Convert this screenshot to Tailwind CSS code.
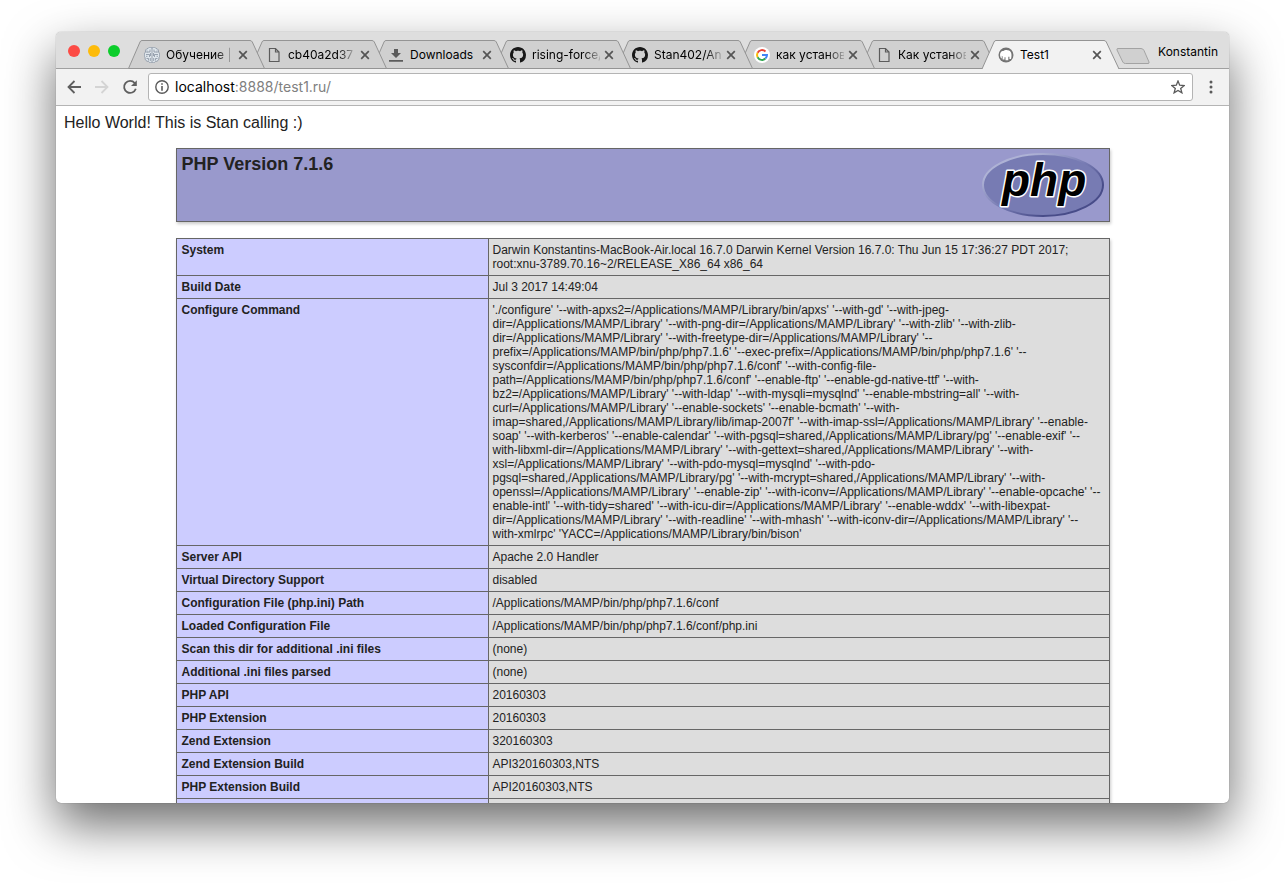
<!DOCTYPE html>
<html lang="ru">
<head>
<meta charset="utf-8">
<title>Test1</title>
<script src="https://cdn.jsdelivr.net/npm/@tailwindcss/browser@4"></script>
</head>
<body class="h-screen overflow-hidden bg-white px-14 pt-8 pb-20 font-['Inter',sans-serif] text-black">
<svg class="hidden" aria-hidden="true">
  <symbol id="tab" viewBox="0 0 138 29" preserveAspectRatio="none"><path d="M.5 28.5L12 2Q12.600 .5 14 .5H122Q123.500 .5 124.300 2L136.500 28.500Z" stroke="#949494" stroke-width="1"/></symbol>
  <symbol id="tab-active" viewBox="0 0 138 29" preserveAspectRatio="none"><path d="M0 29L12 2Q12.600 .5 14 .5H122Q123.500 .5 124.300 2L137 29" stroke="#949494" stroke-width="1"/></symbol>
  <symbol id="x" viewBox="0 0 10 10"><path d="M1.200 1.200L8.800 8.800M8.800 1.200L1.200 8.800" stroke="#555" stroke-width="1.700"/></symbol>
  <symbol id="doc" viewBox="0 0 16 16"><path d="M3.500 1.500H9.500L13 5V14.500H3.500ZM9.500 1.500V5H13" fill="none" stroke="#5c5c5c" stroke-width="1.200"/></symbol>
  <symbol id="dl" viewBox="0 0 16 16"><path d="M6 2H10V6H13L8 11L3 6H6ZM1 13H15V14.700H1Z" fill="#5c5c5c"/></symbol>
  <symbol id="gh" viewBox="0 0 16 16"><path fill="#181818" d="M8 0C3.58 0 0 3.58 0 8c0 3.54 2.29 6.53 5.47 7.59.4.07.55-.17.55-.38 0-.19-.01-.82-.01-1.49-2.01.37-2.53-.49-2.69-.94-.09-.23-.48-.94-.82-1.13-.28-.15-.68-.52-.01-.53.63-.01 1.08.58 1.23.82.72 1.21 1.87.87 2.33.66.07-.52.28-.87.51-1.07-1.78-.2-3.64-.89-3.64-3.95 0-.87.31-1.59.82-2.15-.08-.2-.36-1.02.08-2.12 0 0 .67-.21 2.2.82.64-.18 1.32-.27 2-.27s1.36.09 2 .27c1.53-1.04 2.2-.82 2.2-.82.44 1.1.16 1.92.08 2.12.51.56.82 1.27.82 2.15 0 3.07-1.87 3.75-3.65 3.95.29.25.54.73.54 1.48 0 1.07-.01 1.93-.01 2.2 0 .21.15.46.55.38A8.01 8.01 0 0 0 16 8c0-4.42-3.58-8-8-8Z"/></symbol>
</svg>
<div class="flex h-full flex-col overflow-hidden rounded-[5px] bg-white shadow-[0_0_1px_rgba(0,0,0,0.5),0_22px_50px_0_rgba(0,0,0,0.58)]">
  <header class="relative isolate flex h-[37px] shrink-0 items-start border-b border-[#a0a0a0] bg-[#dedede]">
    <div class="flex w-[72px] gap-2 pt-[13px] pl-3">
      <button aria-label="Close window" class="size-3 rounded-full bg-[#fc4b45]"></button>
      <button aria-label="Minimize window" class="size-3 rounded-full bg-[#fdbb0a]"></button>
      <button aria-label="Zoom window" class="size-3 rounded-full bg-[#0ccd2b]"></button>
    </div>
    <nav class="flex pt-2 text-xs leading-4">
      <div class="relative z-70 -mr-4 flex h-[29px] w-[138px] items-center px-4">
        <svg class="absolute inset-0 h-[29px] w-full fill-[#d0d0d0]"><use href="#tab"/></svg>
        <svg class="relative size-4 shrink-0" viewBox="0 0 16 16"><path d="M8 1C6.500-.3 4.500 .3 4 1.500C2 1.700 1.200 3.500 1.500 5C-.2 6.500 0 9.500 1 10.500C.8 13 2.500 14.500 4.500 14.500C5.500 16 7.300 16 8 15C8.700 16 10.500 16 11.500 14.500C13.500 14.500 15.200 13 15 10.500C16 9.500 16.200 6.500 14.500 5C14.800 3.500 14 1.700 12 1.500C11.500 .3 9.500-.3 8 1Z" fill="#dfe6ec" stroke="#8591a0" stroke-width=".8"/><path d="M8 1V15M6 2.500V5H3.500M2 7.500H5.500V10M6.500 6V9M2.500 11.500H4.500V13.500M6.300 11V14M3 3.500V6M10 2.500V5H12.500M14 7.500H10.500V10M13.500 11.500H11.500V13.500M9.700 11V14M13 3.500V6M9.500 6V9M3.500 9.300H2M14 9.300H12.500" fill="none" stroke="#8591a0" stroke-width=".8"/></svg>
        <a href="#" class="relative ml-1.5 w-[66px] overflow-hidden whitespace-nowrap [mask-image:linear-gradient(to_right,black_75%,transparent_105%)]">Обучение |</a>
        <button aria-label="Close tab" class="relative ml-1.5 size-[10px] shrink-0"><svg class="size-[10px]"><use href="#x"/></svg></button>
      </div>
      <div class="relative z-60 -mr-4 flex h-[29px] w-[138px] items-center px-4">
        <svg class="absolute inset-0 h-[29px] w-full fill-[#d0d0d0]"><use href="#tab"/></svg>
        <svg class="relative size-4 shrink-0"><use href="#doc"/></svg>
        <a href="#" class="relative ml-1.5 w-[66px] overflow-hidden whitespace-nowrap [mask-image:linear-gradient(to_right,black_75%,transparent_105%)]">cb40a2d37</a>
        <button aria-label="Close tab" class="relative ml-1.5 size-[10px] shrink-0"><svg class="size-[10px]"><use href="#x"/></svg></button>
      </div>
      <div class="relative z-50 -mr-4 flex h-[29px] w-[138px] items-center px-4">
        <svg class="absolute inset-0 h-[29px] w-full fill-[#d0d0d0]"><use href="#tab"/></svg>
        <svg class="relative size-4 shrink-0"><use href="#dl"/></svg>
        <a href="#" class="relative ml-1.5 w-[66px] overflow-hidden whitespace-nowrap">Downloads</a>
        <button aria-label="Close tab" class="relative ml-1.5 size-[10px] shrink-0"><svg class="size-[10px]"><use href="#x"/></svg></button>
      </div>
      <div class="relative z-40 -mr-4 flex h-[29px] w-[138px] items-center px-4">
        <svg class="absolute inset-0 h-[29px] w-full fill-[#d0d0d0]"><use href="#tab"/></svg>
        <svg class="relative size-4 shrink-0"><use href="#gh"/></svg>
        <a href="#" class="relative ml-1.5 w-[68px] -mr-0.5 overflow-hidden whitespace-nowrap [mask-image:linear-gradient(to_right,black_75%,transparent_105%)]">rising-force/</a>
        <button aria-label="Close tab" class="relative ml-1.5 size-[10px] shrink-0"><svg class="size-[10px]"><use href="#x"/></svg></button>
      </div>
      <div class="relative z-30 -mr-4 flex h-[29px] w-[138px] items-center px-4">
        <svg class="absolute inset-0 h-[29px] w-full fill-[#d0d0d0]"><use href="#tab"/></svg>
        <svg class="relative size-4 shrink-0"><use href="#gh"/></svg>
        <a href="#" class="relative ml-1.5 w-[68px] -mr-0.5 overflow-hidden whitespace-nowrap [mask-image:linear-gradient(to_right,black_75%,transparent_105%)]">Stan402/An</a>
        <button aria-label="Close tab" class="relative ml-1.5 size-[10px] shrink-0"><svg class="size-[10px]"><use href="#x"/></svg></button>
      </div>
      <div class="relative z-20 -mr-4 flex h-[29px] w-[138px] items-center px-4">
        <svg class="absolute inset-0 h-[29px] w-full fill-[#d0d0d0]"><use href="#tab"/></svg>
        <svg class="relative size-4 shrink-0" viewBox="0 0 16 16" fill="none" stroke-width="2"><circle cx="8" cy="8" r="8" fill="#fff"/><path d="M11.500 4.500A5 5 0 0 0 3.600 5.700" stroke="#ea4335"/><path d="M3.600 5.700A5 5 0 0 0 3.600 10.300" stroke="#fbbc05"/><path d="M3.600 10.300A5 5 0 0 0 11.400 11.600" stroke="#34a853"/><path d="M11.400 11.600A5 5 0 0 0 13 8H8" stroke="#4285f4"/></svg>
        <a href="#" class="relative ml-1.5 w-[68px] -mr-0.5 overflow-hidden whitespace-nowrap [mask-image:linear-gradient(to_right,black_75%,transparent_105%)]">как установ</a>
        <button aria-label="Close tab" class="relative ml-1.5 size-[10px] shrink-0"><svg class="size-[10px]"><use href="#x"/></svg></button>
      </div>
      <div class="relative z-10 -mr-4 flex h-[29px] w-[138px] items-center px-4">
        <svg class="absolute inset-0 h-[29px] w-full fill-[#d0d0d0]"><use href="#tab"/></svg>
        <svg class="relative size-4 shrink-0"><use href="#doc"/></svg>
        <a href="#" class="relative ml-1.5 w-[68px] -mr-0.5 overflow-hidden whitespace-nowrap [mask-image:linear-gradient(to_right,black_75%,transparent_105%)]">Как установ</a>
        <button aria-label="Close tab" class="relative ml-1.5 size-[10px] shrink-0"><svg class="size-[10px]"><use href="#x"/></svg></button>
      </div>
      <div class="relative z-80 -mr-1 flex h-[29px] w-[138px] items-center px-4">
        <svg class="absolute inset-0 h-[29px] w-full fill-[#f2f2f2]"><use href="#tab-active"/></svg>
        <svg class="relative size-4 shrink-0" viewBox="0 0 16 16"><circle cx="8" cy="8" r="7.500" fill="#747474"/><path d="M2.300 9.500C1.500 6 3 4 5.500 4C7 2.600 11.500 2.600 13 5.500C13.800 7.500 13.600 10 13 12H11.400V9.800H10.300V13.200H7.500V10.300H6.500V12.500H4.600V9.500L3.800 8.800V11.500C3 11.300 2.500 10.500 2.300 9.500Z" fill="#fff"/></svg>
        <a href="#" class="relative ml-1.5 w-[66px] overflow-hidden whitespace-nowrap">Test1</a>
        <button aria-label="Close tab" class="relative ml-1.5 size-[10px] shrink-0"><svg class="size-[10px]"><use href="#x"/></svg></button>
      </div>
      <button aria-label="New tab" class="mt-2 h-4 w-[34px]"><svg class="h-4 w-[34px]" viewBox="0 0 34 16"><path d="M2 .5H25Q27 .5 28 2.500L33 14Q33.500 15.500 32 15.500H9.500Q7.500 15.500 6.800 14L1 2Q.5 .5 2 .5Z" fill="#d0d0d0" stroke="#a3a3a3"/></svg></button>
    </nav>
    <button class="mt-3 mr-[11px] ml-auto text-xs leading-4">Konstantin</button>
  </header>

  <div class="flex h-[37px] shrink-0 items-center border-b border-[#b4b4b4] bg-[#f2f2f2] pl-2.5">
    <button aria-label="Back" class="size-4"><svg class="size-4" viewBox="0 0 16 16" fill="none" stroke="#5f5f5f" stroke-width="1.800"><path d="M15 8H2.500M8.500 2L2.500 8L8.500 14"/></svg></button>
    <button aria-label="Forward" class="ml-3 size-4"><svg class="size-4" viewBox="0 0 16 16" fill="none" stroke="#d4d4d4" stroke-width="1.800"><path d="M1 8H13.500M7.500 2L13.500 8L7.500 14"/></svg></button>
    <button aria-label="Reload" class="ml-3 size-4"><svg class="size-4" viewBox="0 0 16 16"><path d="M12.700 4A6 6 0 1 0 13.800 9.800" fill="none" stroke="#5f5f5f" stroke-width="1.800"/><path d="M14.800 1.200V7H9Z" fill="#5f5f5f"/></svg></button>
    <div class="ml-2.5 flex h-7 flex-1 items-center rounded-[3px] border border-[#b4b4b4] bg-white pr-[7px] pl-1.5">
      <svg class="size-[14px] shrink-0" viewBox="0 0 14 14"><circle cx="7" cy="7" r="6.200" fill="none" stroke="#5a5a5a" stroke-width="1.400"/><path d="M6.200 3.200H7.800V4.800H6.200ZM6.200 6H7.800V10.800H6.200Z" fill="#5a5a5a"/></svg>
      <div role="textbox" aria-label="Address" contenteditable="true" class="ml-1.5 flex-1 text-sm leading-5 text-[#808080]"><span class="text-black">localhost</span>:8888/test1.ru/</div>
      <button aria-label="Bookmark" class="size-[14px]"><svg class="size-[14px]" viewBox="0 0 14 14"><path d="M7 1L8.700 5.200L13.200 5.500L9.700 8.400L10.900 12.800L7 10.400L3.100 12.800L4.300 8.400L.8 5.500L5.300 5.200Z" fill="none" stroke="#5a5a5a" stroke-width="1.300"/></svg></button>
    </div>
    <button aria-label="Menu" class="mx-2.5 h-4 w-4"><svg class="size-4" viewBox="0 0 16 16" fill="#5a5a5a"><circle cx="8" cy="3" r="1.500"/><circle cx="8" cy="8" r="1.500"/><circle cx="8" cy="13" r="1.500"/></svg></button>
  </div>

  <main class="min-h-0 flex-1 overflow-hidden px-2 pt-2 font-['Liberation_Sans',Arial,sans-serif] text-[#222]">
    <p class="text-base leading-[18px]">Hello World! This is Stan calling :)</p>
    <div class="mx-auto mt-4 flex h-[74px] max-w-[934px] items-start justify-between border border-[#666] bg-[#9999cc] py-1 pr-[5px] pl-[5px] shadow-[1px_2px_3px_#ccc]">
      <h1 class="text-lg leading-[22px] font-bold">PHP Version 7.1.6</h1>
      <a href="#" aria-label="PHP"><svg class="h-16 w-[122px]" viewBox="0 0 122 64">
        <defs>
          <linearGradient id="rim" x1="0" y1="0" x2="1" y2="1"><stop offset=".2" stop-color="#aeb2d5"/><stop offset=".5" stop-color="#777bb3"/><stop offset=".75" stop-color="#484c89"/></linearGradient>
        </defs>
        <ellipse cx="61" cy="32" rx="60" ry="31" fill="#777bb3" stroke="url(#rim)" stroke-width="2"/>
        <text x="20" y="43" font-family="Liberation Sans" font-size="46" font-weight="700" font-style="italic" fill="#000" stroke="#fff" stroke-width="3" stroke-linejoin="round" paint-order="stroke">php</text>
      </svg></a>
    </div>
    <table class="mx-auto mt-4 w-full max-w-[934px] table-fixed border-collapse text-left text-xs leading-[14px] shadow-[1px_2px_3px_#ccc] [&_td]:border [&_td]:border-[#666] [&_td]:bg-[#ddd] [&_td]:p-1 [&_td]:align-top [&_th]:border [&_th]:border-[#666] [&_th]:bg-[#ccccff] [&_th]:py-1 [&_th]:pr-1 [&_th]:pl-[5px] [&_th]:align-top [&_th]:font-bold">
      <colgroup><col class="w-[312px]"><col></colgroup>
      <tbody>
        <tr><th scope="row">System</th><td>Darwin Konstantins-MacBook-Air.local 16.7.0 Darwin Kernel Version 16.7.0: Thu Jun 15 17:36:27 PDT 2017;<br>root:xnu-3789.70.16~2/RELEASE_X86_64 x86_64</td></tr>
        <tr><th scope="row">Build Date</th><td>Jul 3 2017 14:49:04</td></tr>
        <tr><th scope="row">Configure Command</th><td>'./configure' '--with-apxs2=/Applications/MAMP/Library/bin/apxs' '--with-gd' '--with-jpeg-<br>dir=/Applications/MAMP/Library' '--with-png-dir=/Applications/MAMP/Library' '--with-zlib' '--with-zlib-<br>dir=/Applications/MAMP/Library' '--with-freetype-dir=/Applications/MAMP/Library' '--<br>prefix=/Applications/MAMP/bin/php/php7.1.6' '--exec-prefix=/Applications/MAMP/bin/php/php7.1.6' '--<br>sysconfdir=/Applications/MAMP/bin/php/php7.1.6/conf' '--with-config-file-<br>path=/Applications/MAMP/bin/php/php7.1.6/conf' '--enable-ftp' '--enable-gd-native-ttf' '--with-<br>bz2=/Applications/MAMP/Library' '--with-ldap' '--with-mysqli=mysqlnd' '--enable-mbstring=all' '--with-<br>curl=/Applications/MAMP/Library' '--enable-sockets' '--enable-bcmath' '--with-<br>imap=shared,/Applications/MAMP/Library/lib/imap-2007f' '--with-imap-ssl=/Applications/MAMP/Library' '--enable-<br>soap' '--with-kerberos' '--enable-calendar' '--with-pgsql=shared,/Applications/MAMP/Library/pg' '--enable-exif' '--<br>with-libxml-dir=/Applications/MAMP/Library' '--with-gettext=shared,/Applications/MAMP/Library' '--with-<br>xsl=/Applications/MAMP/Library' '--with-pdo-mysql=mysqlnd' '--with-pdo-<br>pgsql=shared,/Applications/MAMP/Library/pg' '--with-mcrypt=shared,/Applications/MAMP/Library' '--with-<br>openssl=/Applications/MAMP/Library' '--enable-zip' '--with-iconv=/Applications/MAMP/Library' '--enable-opcache' '--<br>enable-intl' '--with-tidy=shared' '--with-icu-dir=/Applications/MAMP/Library' '--enable-wddx' '--with-libexpat-<br>dir=/Applications/MAMP/Library' '--with-readline' '--with-mhash' '--with-iconv-dir=/Applications/MAMP/Library' '--<br>with-xmlrpc' 'YACC=/Applications/MAMP/Library/bin/bison'</td></tr>
        <tr><th scope="row">Server API</th><td>Apache 2.0 Handler</td></tr>
        <tr><th scope="row">Virtual Directory Support</th><td>disabled</td></tr>
        <tr><th scope="row">Configuration File (php.ini) Path</th><td>/Applications/MAMP/bin/php/php7.1.6/conf</td></tr>
        <tr><th scope="row">Loaded Configuration File</th><td>/Applications/MAMP/bin/php/php7.1.6/conf/php.ini</td></tr>
        <tr><th scope="row">Scan this dir for additional .ini files</th><td>(none)</td></tr>
        <tr><th scope="row">Additional .ini files parsed</th><td>(none)</td></tr>
        <tr><th scope="row">PHP API</th><td>20160303</td></tr>
        <tr><th scope="row">PHP Extension</th><td>20160303</td></tr>
        <tr><th scope="row">Zend Extension</th><td>320160303</td></tr>
        <tr><th scope="row">Zend Extension Build</th><td>API320160303,NTS</td></tr>
        <tr><th scope="row">PHP Extension Build</th><td>API20160303,NTS</td></tr>
        <tr class="h-[23px]"><th></th><td></td></tr>
      </tbody>
    </table>
  </main>
</div>
</body>
</html>
